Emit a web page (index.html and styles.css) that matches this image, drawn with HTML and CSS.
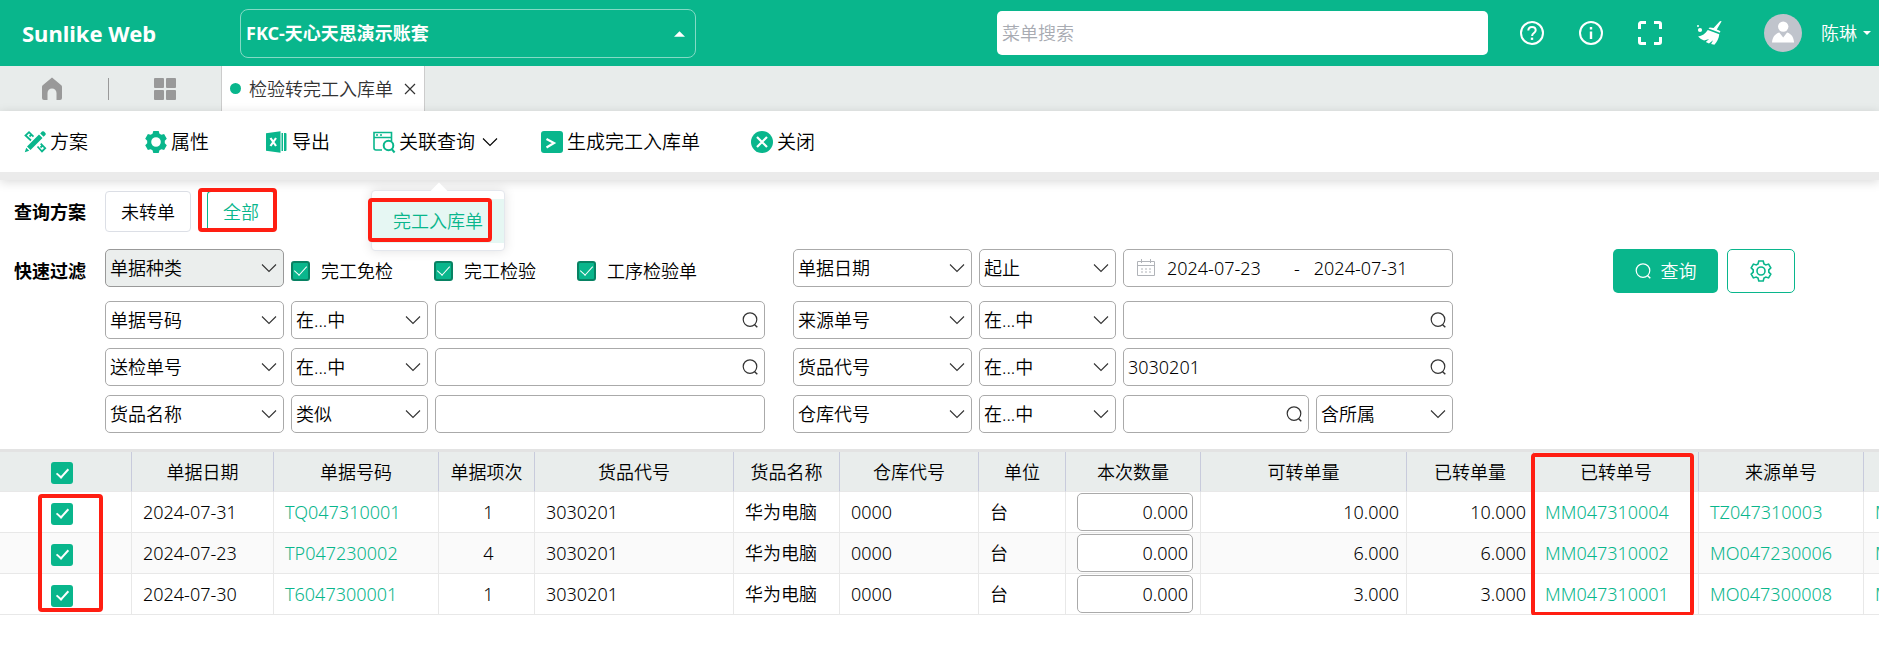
FILE: index.html
```html
<!DOCTYPE html>
<html lang="zh-CN">

<head>
  <meta charset="UTF-8">
  <meta name="viewport" content="width=device-width, initial-scale=1.0">
  <title>检验转完工入库单</title>
  <link rel="stylesheet" href="styles.css">
</head>

<body>
  <svg class="sprite" aria-hidden="true">
    <symbol id="i-down" viewBox="0 0 16 16"><path d="M1 4.5 8 11.5 15 4.5" fill="none" stroke="currentColor" stroke-width="1.1" /></symbol>
    <symbol id="i-search" viewBox="0 0 16 16"><circle cx="8" cy="7.6" r="6.8" fill="none" stroke="currentColor" stroke-width="1.2" /><path d="m12.4 12.4 2.9 2.9" stroke="currentColor" stroke-width="1.4" /></symbol>
  </svg>

  <header class="header">
    <div class="logo">Sunlike Web</div>
    <div class="account">
      <select class="account-select" aria-label="账套">
        <option>FKC-天心天思演示账套</option>
      </select>
      <svg class="account-caret" viewBox="0 0 12 6"><path d="M0 6 6 0l6 6z" fill="#fff" /></svg>
    </div>
    <input class="menu-search" type="text" placeholder="菜单搜索" aria-label="菜单搜索">
    <div class="header-icons">
      <button class="icon-btn" aria-label="帮助">
        <svg viewBox="0 0 24 24" fill="none" stroke="#fff" stroke-width="2">
          <circle cx="12" cy="12" r="11" />
          <path d="M8.3 9.6c0-2.3 1.6-3.7 3.7-3.7s3.7 1.4 3.7 3.4c0 2.6-3.6 2.9-3.6 5.6" />
          <path d="M12 16.6v2.3" stroke-width="2.4" />
        </svg>
      </button>
      <button class="icon-btn" aria-label="信息">
        <svg viewBox="0 0 24 24" fill="none" stroke="#fff" stroke-width="2">
          <circle cx="12" cy="12" r="11" />
          <path d="M12 6v2.6M12 10.4V18" stroke-width="2.4" />
        </svg>
      </button>
      <button class="icon-btn" aria-label="全屏">
        <svg viewBox="0 0 24 24" fill="none" stroke="#fff" stroke-width="3">
          <path d="M1.500 8V3a1.500 1.500 0 0 1 1.500-1.500H8M16 1.500h5A1.500 1.500 0 0 1 22.500 3v5M22.500 16v5a1.500 1.500 0 0 1-1.500 1.500h-5M8 22.500H3A1.500 1.500 0 0 1 1.500 21v-5" />
        </svg>
      </button>
      <button class="icon-btn" aria-label="清理">
        <svg viewBox="0 0 24 24" fill="#fff">
          <path d="M24.500 0.400 19.800 8.600c1.200.5 2.400 1 3.600 1.700l-.5 1.500L11.500 7.600l1.200-1.200c1.400.1 2.700.4 3.900.7L22.600.6c.6-.7 1.500-.8 1.900-.2z" />
          <path d="M10.800 8.900 22.300 13.200c-.4 4.300-2.300 7.800-4.900 10.500l-3.300-.7 2-3.700-4.100 3.200-3.200-1.600 3.300-3-5 1.700c-2.200-1-4.300-2.400-6-4.200 4-.5 7.200-2.600 9.700-6.500z" />
          <circle cx="3" cy="9" r="2.100" /><circle cx="1" cy="5" r="1" />
        </svg>
      </button>
    </div>
    <svg class="avatar" viewBox="0 0 38 38">
      <circle cx="19" cy="19" r="19" fill="#c0c4cc" />
      <circle cx="19.200" cy="12.600" r="5.200" fill="#fff" />
      <path d="M8 28.600c.4-5.200 2.800-8.600 7.300-10l3.900 4.800 3.900-4.800c4.500 1.400 6.600 4.800 7 10z" fill="#fff" />
    </svg>
    <button class="user">陈琳<svg viewBox="0 0 8 4"><path d="M0 0h8L4 4z" fill="#fff" /></svg></button>
  </header>

  <nav class="tabs">
    <button class="icon-btn" aria-label="首页">
      <svg viewBox="0 0 24 24" fill="#999"><path d="M12 0.500 21 8c.6.500 1 1 1 1.800V21a2 2 0 0 1-2 2h-3.500v-7a4.500 4.500 0 0 0-9 0v7H4a2 2 0 0 1-2-2V9.800C2 9 2.400 8.500 3 8z" /></svg>
    </button>
    <span class="tabs-line"></span>
    <button class="icon-btn" aria-label="菜单">
      <svg viewBox="0 0 24 24" fill="#999">
        <rect x="1" y="1" width="10" height="10" rx="1" /><rect x="13" y="1" width="10" height="10" rx="1" />
        <rect x="1" y="13" width="10" height="10" rx="1" /><rect x="13" y="13" width="10" height="10" rx="1" />
      </svg>
    </button>
    <div class="tab">
      <span class="tab-dot"></span>
      <span>检验转完工入库单</span>
      <button class="tab-close" aria-label="关闭标签"><svg viewBox="0 0 12 12"><path d="m1 1 10 10M11 1 1 11" stroke="#333" stroke-width="1.200" /></svg></button>
    </div>
  </nav>

  <div class="toolbar">
    <button class="tool tool-wide">
      <svg viewBox="0 0 22 22">
        <path d="M15 3.500 18.500 7 6.500 19 3 15.500zM2.200 16.800 5.200 19.800 .800 21.200zM16.200 2.400 18 .600a1.500 1.500 0 0 1 2 0L21.400 2a1.500 1.500 0 0 1 0 2L19.600 5.800z" fill="#09b68c" />
        <path d="M7 9.500 1.500 4.500 5 1.200l4.500 4.500M13.500 15.500l4.500 5 3.200-3.300-4.500-4.500M5.500 5.500 7 4M16.500 16.500 18 15" fill="none" stroke="#09b68c" stroke-width="1.800" />
      </svg>方案
    </button>
    <button class="tool tool-wide">
      <svg viewBox="0 0 22 22"><path fill="#09b68c" fill-rule="evenodd" d="M8.300 0h5.400l.8 2.700 1.900 1.100 2.700-.7 2.700 4.700-2 1.900v2.600l2 1.900-2.700 4.700-2.700-.7-1.900 1.100-.8 2.700H8.300l-.8-2.700-1.900-1.100-2.700.7-2.700-4.700 2-1.900V9.700l-2-1.900 2.700-4.700 2.700.7 1.900-1.100zM11 6.200a4.800 4.800 0 1 0 0 9.600 4.800 4.800 0 0 0 0-9.600z" /></svg>属性
    </button>
    <button class="tool">
      <svg viewBox="0 0 22 22"><path d="M0 2.200 14.500.2v21.600L0 19.800z" fill="#09b68c" /><path d="m4.500 7 5.500 8M10 7l-5.500 8" stroke="#fff" stroke-width="2.200" /><path d="M15.500 2h1.500v18h-1.500zM18 2h1.500a1 1 0 0 1 1 1v16a1 1 0 0 1-1 1H18z" fill="#09b68c" /></svg>导出
    </button>
    <div class="tool-drop">
      <button class="tool">
        <svg viewBox="0 0 22 22" fill="none" stroke="#09b68c" stroke-width="1.600">
          <path d="M9 19H3a2 2 0 0 1-2-2V1.500h17.500V10M1 6.500h17.500" />
          <path d="M3 4h2M7 4h2" /><circle cx="15.500" cy="14.500" r="4.800" stroke-width="2" /><path d="m18.600 18 3 3.500" stroke-width="2" />
        </svg>关联查询<svg class="tool-arrow"><use href="#i-down" /></svg>
      </button>
      <div class="popup">
        <button class="popup-item">完工入库单</button>
        <span class="mark mark-popup"></span>
      </div>
    </div>
    <button class="tool">
      <svg viewBox="0 0 22 22"><rect width="22" height="22" rx="3" fill="#09b68c" /><path d="m5.500 8 7.500 4-7.500 4.500" fill="none" stroke="#fff" stroke-width="2.200" /></svg>生成完工入库单
    </button>
    <button class="tool tool-close">
      <svg viewBox="0 0 22 22"><circle cx="11" cy="11" r="11" fill="#09b68c" /><path d="m6 6 10 10M16 6 6 16" stroke="#fff" stroke-width="2.200" /></svg>关闭
    </button>
  </div>

  <main>
    <section class="scheme">
      <span class="label">查询方案</span>
      <button class="scheme-btn">未转单</button>
      <button class="scheme-btn active">全部<span class="mark mark-scheme"></span></button>
    </section>

    <section class="filter">
      <span class="label filter-label">快速过滤</span>
      <div class="filter-col">
        <div class="row row-first">
          <div class="select field"><select class="gray" aria-label="字段"><option>单据种类</option></select><svg><use href="#i-down" /></svg></div>
          <div class="checks">
            <label class="check"><input type="checkbox" checked>完工免检</label>
            <label class="check"><input type="checkbox" checked>完工检验</label>
            <label class="check"><input type="checkbox" checked>工序检验单</label>
          </div>
        </div>
        <div class="row">
          <div class="select field"><select aria-label="字段"><option>单据号码</option></select><svg><use href="#i-down" /></svg></div>
          <div class="select op"><select aria-label="条件"><option>在...中</option></select><svg><use href="#i-down" /></svg></div>
          <div class="text"><input type="text" aria-label="单据号码"><svg><use href="#i-search" /></svg></div>
        </div>
        <div class="row">
          <div class="select field"><select aria-label="字段"><option>送检单号</option></select><svg><use href="#i-down" /></svg></div>
          <div class="select op"><select aria-label="条件"><option>在...中</option></select><svg><use href="#i-down" /></svg></div>
          <div class="text"><input type="text" aria-label="送检单号"><svg><use href="#i-search" /></svg></div>
        </div>
        <div class="row">
          <div class="select field"><select aria-label="字段"><option>货品名称</option></select><svg><use href="#i-down" /></svg></div>
          <div class="select op"><select aria-label="条件"><option>类似</option></select><svg><use href="#i-down" /></svg></div>
          <div class="text"><input type="text" aria-label="货品名称"></div>
        </div>
      </div>

      <div class="filter-col">
        <div class="row row-first">
          <div class="select field"><select aria-label="字段"><option>单据日期</option></select><svg><use href="#i-down" /></svg></div>
          <div class="select op"><select aria-label="条件"><option>起止</option></select><svg><use href="#i-down" /></svg></div>
          <div class="date">
            <svg viewBox="0 0 18 18" fill="none" stroke="#b0b3b8">
              <path d="M.5 2.500h17v14H.5zM.5 6.500h17M4.500 0v4M13.500 0v4" /><path d="M4 10h10M4 13h10" stroke-dasharray="2 2" />
            </svg>
            <input type="text" value="2024-07-23" aria-label="开始日期">
            <span>-</span>
            <input type="text" value="2024-07-31" aria-label="结束日期">
          </div>
        </div>
        <div class="row">
          <div class="select field"><select aria-label="字段"><option>来源单号</option></select><svg><use href="#i-down" /></svg></div>
          <div class="select op"><select aria-label="条件"><option>在...中</option></select><svg><use href="#i-down" /></svg></div>
          <div class="text"><input type="text" aria-label="来源单号"><svg><use href="#i-search" /></svg></div>
        </div>
        <div class="row">
          <div class="select field"><select aria-label="字段"><option>货品代号</option></select><svg><use href="#i-down" /></svg></div>
          <div class="select op"><select aria-label="条件"><option>在...中</option></select><svg><use href="#i-down" /></svg></div>
          <div class="text"><input type="text" value="3030201" aria-label="货品代号"><svg><use href="#i-search" /></svg></div>
        </div>
        <div class="row">
          <div class="select field"><select aria-label="字段"><option>仓库代号</option></select><svg><use href="#i-down" /></svg></div>
          <div class="select op"><select aria-label="条件"><option>在...中</option></select><svg><use href="#i-down" /></svg></div>
          <div class="text"><input type="text" aria-label="仓库代号"><svg><use href="#i-search" /></svg></div>
          <div class="select op"><select aria-label="所属"><option>含所属</option></select><svg><use href="#i-down" /></svg></div>
        </div>
      </div>

      <div class="actions">
        <button class="btn-query"><svg><use href="#i-search" /></svg>查询</button>
        <button class="btn-set" aria-label="设置">
          <svg viewBox="0 0 22 22" fill="none" stroke="#09b68c" stroke-width="1.600">
            <path d="M8.800 1h4.400l.8 2.900 1.800 1 2.800-.8 2.200 3.800-2 2v2.200l2 2-2.200 3.800-2.800-.8-1.800 1-.8 2.900H8.800L8 18.100l-1.800-1-2.800.8-2.200-3.800 2-2V9.900l-2-2 2.200-3.800 2.800.8 1.800-1z" />
            <circle cx="11" cy="11" r="4" />
          </svg>
        </button>
      </div>
    </section>

    <div class="table-wrap">
      <table class="table">
        <colgroup>
          <col class="w-132"><col class="w-142"><col class="w-165"><col class="w-96"><col class="w-199"><col class="w-106"><col class="w-139">
          <col class="w-87"><col class="w-135"><col class="w-206"><col class="w-127"><col class="w-165"><col class="w-165"><col class="w-165">
        </colgroup>
        <thead>
          <tr>
            <th class="pick"><input type="checkbox" checked aria-label="全选"></th>
            <th>单据日期</th>
            <th>单据号码</th>
            <th>单据项次</th>
            <th>货品代号</th>
            <th>货品名称</th>
            <th>仓库代号</th>
            <th>单位</th>
            <th>本次数量</th>
            <th>可转单量</th>
            <th>已转单量</th>
            <th class="marked">已转单号<span class="mark mark-col"></span></th>
            <th>来源单号</th>
            <th></th>
          </tr>
        </thead>
        <tbody>
          <tr>
            <td class="pick marked"><input type="checkbox" checked aria-label="选择"><span class="mark mark-pick"></span></td>
            <td>2024-07-31</td>
            <td><a href="#">TQ047310001</a></td>
            <td class="center">1</td>
            <td>3030201</td>
            <td>华为电脑</td>
            <td>0000</td>
            <td>台</td>
            <td class="qty"><input type="text" value="0.000" aria-label="本次数量"></td>
            <td class="num">10.000</td>
            <td class="num">10.000</td>
            <td><a href="#">MM047310004</a></td>
            <td><a href="#">TZ047310003</a></td>
            <td><a href="#">M</a></td>
          </tr>
          <tr>
            <td class="pick"><input type="checkbox" checked aria-label="选择"></td>
            <td>2024-07-23</td>
            <td><a href="#">TP047230002</a></td>
            <td class="center">4</td>
            <td>3030201</td>
            <td>华为电脑</td>
            <td>0000</td>
            <td>台</td>
            <td class="qty"><input type="text" value="0.000" aria-label="本次数量"></td>
            <td class="num">6.000</td>
            <td class="num">6.000</td>
            <td><a href="#">MM047310002</a></td>
            <td><a href="#">MO047230006</a></td>
            <td><a href="#">M</a></td>
          </tr>
          <tr>
            <td class="pick"><input type="checkbox" checked aria-label="选择"></td>
            <td>2024-07-30</td>
            <td><a href="#">T6047300001</a></td>
            <td class="center">1</td>
            <td>3030201</td>
            <td>华为电脑</td>
            <td>0000</td>
            <td>台</td>
            <td class="qty"><input type="text" value="0.000" aria-label="本次数量"></td>
            <td class="num">3.000</td>
            <td class="num">3.000</td>
            <td><a href="#">MM047310001</a></td>
            <td><a href="#">MO047300008</a></td>
            <td><a href="#">M</a></td>
          </tr>
        </tbody>
      </table>
    </div>
  </main>
</body>

</html>
```

FILE: styles.css
```css
* {
  box-sizing: border-box;
}

body {
  margin: 0;
  background: #fff;
  color: #000;
  font-family: "Noto Sans", "Noto Sans CJK SC", sans-serif;
  font-size: 18px;
  font-weight: 350;
  line-height: 24px;
}

button,
input,
select {
  margin: 0;
  padding: 0;
  border: 0;
  background: none;
  color: inherit;
  font: inherit;
}

select,
input {
  appearance: none;
  width: 100%;
  outline: none;
}

svg {
  display: block;
  flex: none;
  overflow: visible;
}

.sprite {
  position: absolute;
  width: 0;
  height: 0;
}

.icon-btn,
.icon-btn svg {
  width: 24px;
  height: 24px;
}

/* red callout frames */
.mark {
  position: absolute;
  z-index: 5;
  border: 4px solid #ff1e12;
  border-radius: 4px;
  pointer-events: none;
}

/* header */
.header {
  display: flex;
  align-items: center;
  height: 66px;
  padding: 0 8px 0 22px;
  background: #09b68c;
  color: #fff;
}

.logo {
  width: 218px;
  font-size: 22px;
  font-weight: 700;
}

.account {
  position: relative;
  width: 456px;
}

.account-select {
  height: 49px;
  padding: 0 5px;
  border: 1px solid #84dac5;
  border-radius: 8px;
  font-weight: 700;
}

.account-caret {
  position: absolute;
  top: 22px;
  right: 11px;
  width: 11px;
  height: 6px;
}

.menu-search {
  width: 491px;
  height: 44px;
  margin: 0 32px 0 auto;
  padding: 0 5px;
  border-radius: 5px;
  background: #fff;
  color: #333;
}

.menu-search::placeholder {
  color: #a8abb2;
}

.header-icons {
  display: flex;
  gap: 35px;
  margin-right: 43px;
}

.avatar {
  width: 38px;
  height: 38px;
  margin-right: 19px;
}

.user {
  display: flex;
  align-items: center;
  gap: 6px;
}

.user svg {
  width: 8px;
  height: 4px;
}

/* tabs */
.tabs {
  display: flex;
  align-items: center;
  gap: 44px;
  height: 45px;
  padding-left: 40px;
  background: #e8eceb;
}

.tabs-line {
  width: 1px;
  height: 22px;
  background: #999;
}

.tab {
  display: flex;
  align-items: center;
  height: 45px;
  padding: 0 8px;
  border: 1px solid #ccc;
  border-width: 0 1px;
  background: #fff;
  color: #333;
}

.tab-dot {
  width: 11px;
  height: 11px;
  margin-right: 8px;
  border-radius: 50%;
  background: #09b68c;
}

.tab-close {
  margin-left: 11px;
}

.tab-close svg {
  width: 12px;
  height: 12px;
}

/* toolbar */
.toolbar {
  position: relative;
  z-index: 2;
  display: flex;
  align-items: center;
  gap: 43px;
  height: 69px;
  padding-left: 24px;
  border-bottom: 8px solid #ebebeb;
  background: #fff;
  box-shadow: 0 2px 10px rgba(0, 0, 0, 0.15);
  font-size: 19px;
}

.tool {
  display: flex;
  align-items: center;
  gap: 4px;
}

.tool svg {
  width: 22px;
  height: 22px;
}

.tool-wide {
  margin-right: 14px;
}

.tool-close {
  margin-left: 8px;
}

.tool .tool-arrow {
  width: 16px;
  height: 16px;
  margin-left: 3px;
}

.tool-drop {
  position: relative;
}

.popup {
  position: absolute;
  top: 60px;
  left: -2px;
  padding: 8px 0 7px;
  border: 1px solid #e4e7ed;
  border-radius: 4px;
  background: #fff;
  box-shadow: 0 0 12px rgba(0, 0, 0, 0.12);
  font-size: 18px;
}

.popup::before {
  content: "";
  position: absolute;
  top: -6px;
  left: 61px;
  width: 12px;
  height: 12px;
  background: #fff;
  transform: rotate(45deg);
}

.popup-item {
  position: relative;
  height: 44px;
  padding: 0 21px;
  background: #e6f7f3;
  color: #09b68c;
  white-space: nowrap;
}

.mark-popup {
  top: 7px;
  left: -4px;
  width: 124px;
  height: 44px;
}

/* scheme */
.label {
  width: 91px;
  font-weight: 700;
}

.scheme {
  display: flex;
  align-items: center;
  padding: 11px 14px 0;
}

.scheme-btn {
  position: relative;
  height: 41px;
  margin-right: 16px;
  padding: 0 15px;
  border: 1px solid #dcdfe6;
  border-radius: 4px;
}

.scheme-btn.active {
  border-color: #09b68c transparent transparent #09b68c;
  color: #09b68c;
}

.mark-scheme {
  top: -4px;
  right: -3px;
  bottom: -1px;
  left: -10px;
}

/* filter */
.filter {
  display: flex;
  padding: 17px 14px 16px;
}

.filter-label {
  line-height: 44px;
}

.filter-col {
  display: flex;
  flex: 0 1 660px;
  flex-direction: column;
  gap: 9px;
  margin-right: 28px;
}

.row {
  display: flex;
  gap: 7px;
}

.row-first {
  height: 43px;
}

.select,
.text {
  position: relative;
}

.select select,
.text input,
.date {
  height: 38px;
  padding: 0 4px;
  border: 1px solid #aaa;
  border-radius: 5px;
  background: #fff;
}

.select .gray {
  background: #ebeeed;
  border-color: #999;
}

.select svg,
.text svg {
  position: absolute;
  top: 11px;
  right: 7px;
  width: 16px;
  height: 16px;
  color: #333;
  pointer-events: none;
}

.field {
  flex: 0 0 179px;
}

.op {
  flex: 0 0 137px;
}

.text,
.date {
  flex: 1;
  min-width: 0;
}

.date {
  display: flex;
  align-items: center;
  padding-left: 13px;
}

.date svg {
  width: 18px;
  height: 18px;
  margin-right: 12px;
}

.date input {
  width: 104px;
}

.date span {
  margin: 0 14px 0 23px;
}

.checks {
  display: flex;
  align-items: center;
}

.check {
  display: flex;
  align-items: center;
  width: 143px;
  white-space: nowrap;
}

input[type="checkbox"] {
  display: inline-flex;
  align-items: center;
  justify-content: center;
  flex: none;
  width: 22px;
  height: 22px;
  border-radius: 3px;
  background: #09b68c;
  vertical-align: middle;
}

input[type="checkbox"]:checked::after {
  content: "";
  width: 5px;
  height: 10px;
  margin-top: -3px;
  border: solid #fff;
  border-width: 0 2px 2px 0;
  transform: rotate(42deg);
}

.check input[type="checkbox"] {
  width: 19px;
  height: 20px;
  margin-right: 11px;
  border: 2px solid #088263;
}

.check input[type="checkbox"]:checked::after {
  width: 6px;
  height: 11px;
  border-width: 0 1px 1px 0;
}

.actions {
  display: flex;
  gap: 9px;
  margin-left: 132px;
}

.btn-query {
  display: flex;
  align-items: center;
  justify-content: center;
  gap: 10px;
  width: 105px;
  height: 44px;
  border-radius: 5px;
  background: #09b68c;
  color: #fff;
}

.btn-query svg {
  width: 16px;
  height: 16px;
}

.btn-set {
  display: flex;
  align-items: center;
  justify-content: center;
  width: 68px;
  height: 44px;
  border: 1px solid #09b68c;
  border-radius: 5px;
}

.btn-set svg {
  width: 22px;
  height: 22px;
}

/* table */
.table-wrap {
  overflow: hidden;
  border-top: 3px solid #e3e3e3;
}

.table {
  width: 2029px;
  border-collapse: separate;
  border-spacing: 0;
  table-layout: fixed;
}

.table th,
.table td {
  height: 41px;
  padding: 0 7px 0 11px;
  border: solid #e8e8e8;
  border-width: 0 1px 1px 0;
  font-weight: 350;
  text-align: left;
  white-space: nowrap;
}

.table th {
  height: 40px;
  padding: 0;
  border-right-color: #c8cbdc;
  background: #e9edec;
  text-align: center;
}

.table tr:nth-child(even) td {
  background: #fafafa;
}

.table .center {
  text-align: center;
}

.table .num {
  text-align: right;
}

.table .pick {
  padding: 0 7px 0 0;
  text-align: center;
}

.table a {
  color: #09b68c;
  text-decoration: none;
}

.qty input {
  display: block;
  height: 38px;
  padding: 0 4px;
  border: 1px solid #aaa;
  border-radius: 5px;
  background: #fff;
  text-align: right;
}

.marked {
  position: relative;
}

.mark-col {
  top: 1px;
  left: -3px;
  width: 163px;
  height: 163px;
}

.mark-pick {
  top: 2px;
  left: 38px;
  width: 65px;
  height: 118px;
}

.w-87 { width: 87px; }
.w-96 { width: 96px; }
.w-106 { width: 106px; }
.w-127 { width: 127px; }
.w-132 { width: 132px; }
.w-135 { width: 135px; }
.w-139 { width: 139px; }
.w-142 { width: 142px; }
.w-165 { width: 165px; }
.w-199 { width: 199px; }
.w-206 { width: 206px; }
```
